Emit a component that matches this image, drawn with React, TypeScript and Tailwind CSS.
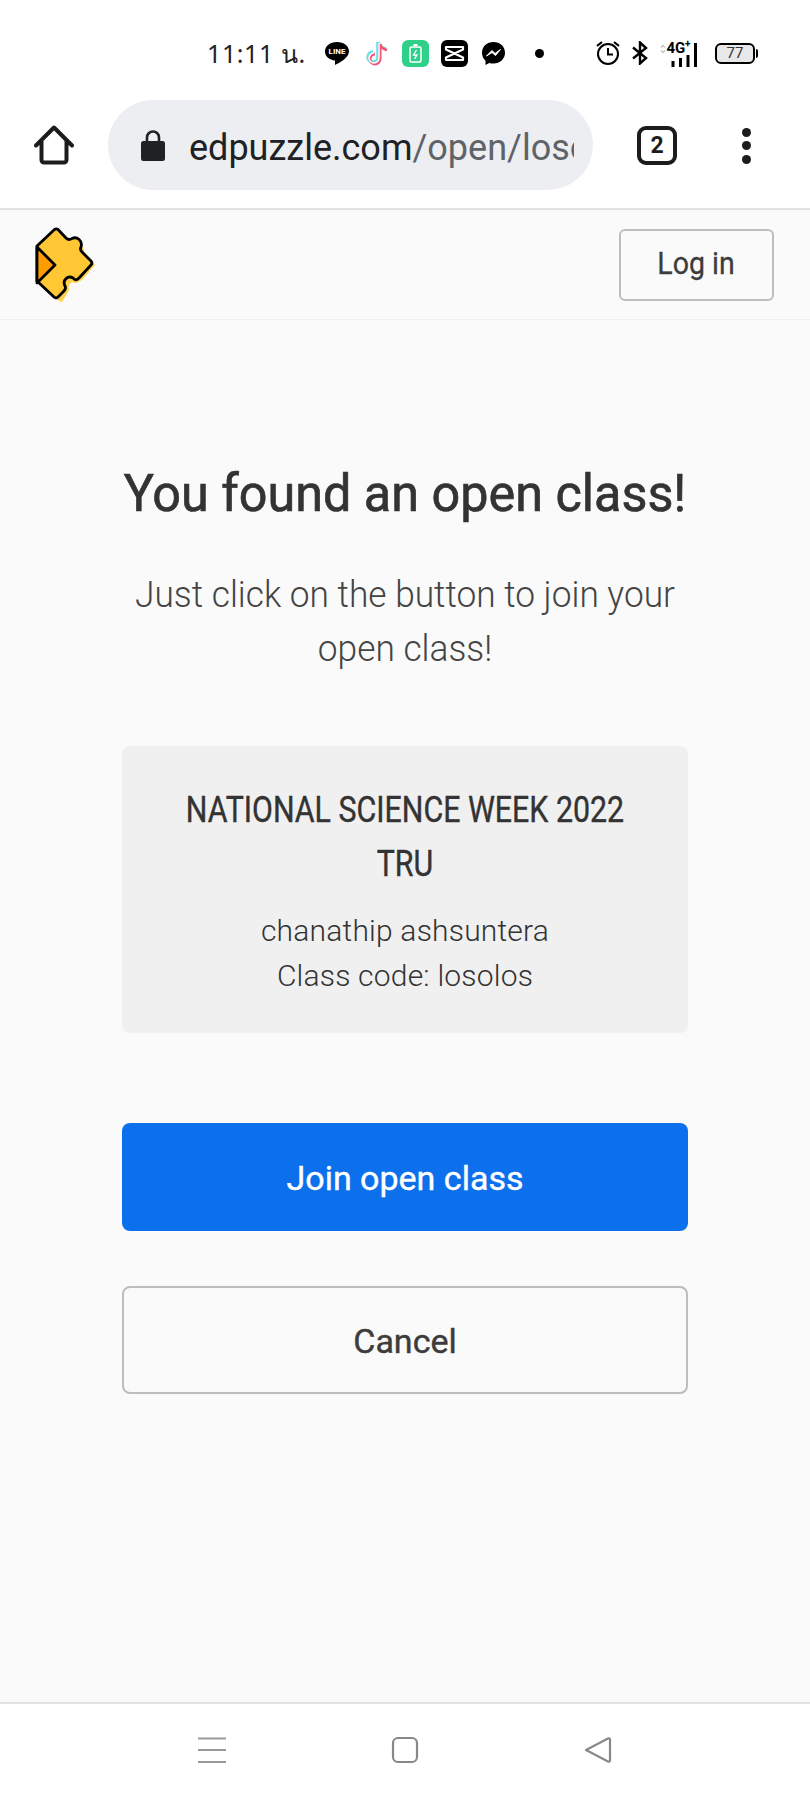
export default function App() {
  return (
    <div className="w-[810px] h-[1800px] flex flex-col bg-[#fafafa] overflow-hidden font-['Roboto',sans-serif] text-[#333]">
      {/* Phone status bar */}
      <div className="h-[100px] bg-white flex items-center pl-[207px] pt-[6px] shrink-0">
        <span className="text-[25px] tracking-[0.6px] leading-none text-[#222] w-[112px] whitespace-nowrap font-['Noto_Sans','Roboto',sans-serif]">11:11 น.</span>
        <svg width="26" height="26" viewBox="0 0 26 26" className="ml-[5px]">
          <path d="M13 2C6 2 1 6 1 11.500C1 16.500 5.500 20 11 20.500L11 25C15 23 25 18 25 11.500C25 6 20 2 13 2Z" fill="#000" />
          <text x="13" y="14" textAnchor="middle" fontSize="8" fontWeight="700" fill="#fff" fontFamily="Roboto">LINE</text>
        </svg>
        <svg width="26" height="28" viewBox="0 0 26 28" className="ml-[13px]">
          <path d="M15 3V18A5 5 0 1 1 10 13" fill="none" stroke="#67e0e6" strokeWidth="3.500" />
          <path d="M15 3C16 7 19 9 23 9.500" fill="none" stroke="#67e0e6" strokeWidth="3" />
          <path d="M17 5V20A5 5 0 1 1 12 15" fill="none" stroke="#f0557a" strokeWidth="3" />
          <path d="M17 5C18 8 21 10.500 24 11" fill="none" stroke="#f0557a" strokeWidth="2.500" />
          <path d="M16 4V19A5 5 0 1 1 11 14" fill="none" stroke="#fff" strokeWidth="1.500" />
        </svg>
        <div className="ml-[13px] w-[27px] h-[27px] rounded-[6px] bg-[#2fd08a] flex items-center justify-center">
          <svg width="13" height="19" viewBox="0 0 13 19">
            <rect x="1" y="3" width="11" height="15" rx="1.500" fill="none" stroke="#fff" strokeWidth="1.500" />
            <path d="M4.500 1H8.500" stroke="#fff" strokeWidth="2" />
            <path d="M7.500 6L4.500 11H8L5.500 15" fill="none" stroke="#fff" strokeWidth="1.300" />
          </svg>
        </div>
        <div className="ml-[12px] w-[27px] h-[27px] rounded-[6px] bg-black flex items-center justify-center">
          <svg width="21" height="17" viewBox="0 0 21 17">
            <path d="M2 2H19V4.500L2 12.500V15H19V12.500L2 4.500Z" fill="none" stroke="#fff" strokeWidth="2.200" strokeLinejoin="round" />
          </svg>
        </div>
        <svg width="25" height="25" viewBox="0 0 25 25" className="ml-[13px]">
          <path d="M12.500 1C6 1 1 5.500 1 11.800C1 15 2.300 17.800 4.500 19.800V24L8.300 21.900C9.600 22.300 11 22.500 12.500 22.500C19 22.500 24 18 24 11.800C24 5.500 19 1 12.500 1Z" fill="#000" />
          <path d="M5.500 15L11 9.500L14 12.500L19.500 8.500L14.500 14.500L11 11.500Z" fill="#fff" stroke="#fff" strokeWidth="1" strokeLinejoin="round" />
        </svg>
        <div className="ml-[29px] w-[9px] h-[9px] rounded-full bg-black" />
        <svg width="26" height="26" viewBox="0 0 26 26" className="ml-[51px]">
          <circle cx="13" cy="14" r="10" fill="none" stroke="#000" strokeWidth="2" />
          <path d="M13 8V14.500H18" fill="none" stroke="#000" strokeWidth="2" />
          <path d="M2 6L7 2M24 6L19 2" stroke="#000" strokeWidth="2.200" />
        </svg>
        <svg width="18" height="24" viewBox="0 0 18 24" className="ml-[10px]">
          <path d="M2 6.500L15 17L9 22.500V1.500L15 7L2 17.500" fill="none" stroke="#000" strokeWidth="2.400" />
        </svg>
        <svg width="44" height="28" viewBox="0 0 44 28" className="ml-[9px]">
          <path d="M3 8.500L5 6.500L7 8.500M3 11.500L5 13.500L7 11.500" fill="none" stroke="#c4c4c4" strokeWidth="1.300" />
          <text x="8.500" y="14" fontSize="15" fontWeight="700" fill="#000" fontFamily="Roboto">4G</text>
          <text x="27" y="8" fontSize="10" fontWeight="700" fill="#000" fontFamily="Roboto">+</text>
          <rect x="13.500" y="22" width="3" height="6" fill="#000" />
          <rect x="21" y="19" width="3" height="9" fill="#000" />
          <rect x="28.500" y="16" width="3" height="12" fill="#000" />
          <rect x="36" y="4" width="3" height="24" fill="#000" />
        </svg>
        <div className="ml-[13px] flex items-center">
          <div className="w-[40px] h-[21px] rounded-[6px] border-2 border-black bg-[#e8e8e8] flex items-center justify-center text-[15px] leading-none text-[#333]">77</div>
          <div className="ml-[1px] w-[2px] h-[9px] rounded-r-sm bg-black" />
        </div>
      </div>

      {/* Browser toolbar */}
      <div className="h-[110px] bg-white border-b-2 border-[#e2e2e2] flex items-start shrink-0">
        <div className="w-[108px] h-[90px] flex items-center justify-start pl-[34px]">
          <svg width="40" height="40" viewBox="0 0 40 40">
            <path d="M2 20.500L20 2.500L38 20.500M7.500 16V35A2.500 2.500 0 0 0 10 37.500H30A2.500 2.500 0 0 0 32.500 35V16" fill="none" stroke="#1c1c1c" strokeWidth="4" strokeLinecap="round" strokeLinejoin="round" />
          </svg>
        </div>
        <div className="w-[485px] h-[90px] rounded-full bg-[#eceef1] flex items-center pl-[33px] overflow-hidden">
          <svg width="24" height="32" viewBox="0 0 24 32" className="shrink-0">
            <path d="M6 13V8.500A6 6 0 0 1 18 8.500V13" fill="none" stroke="#202124" strokeWidth="2.600" />
            <rect x="0" y="12" width="24" height="20" rx="2.500" fill="#202124" />
          </svg>
          <div className="ml-[24px] w-[385px] h-[50px] overflow-hidden whitespace-nowrap text-[36px] leading-[50px] pt-[3px]">
            <span className="text-[#202124]">edpuzzle.com</span>
            <span className="text-[#5f6368]">/open/losolos</span>
          </div>
        </div>
        <div className="ml-[44px] mt-[26px] w-[40px] h-[39px] rounded-[9px] border-[4px] border-[#1c1c1c] flex items-center justify-center text-[23px] font-bold leading-none text-[#1c1c1c]">2</div>
        <div className="ml-[65px] mt-[27.5px] flex flex-col gap-[4.500px]">
          <div className="w-[9px] h-[9px] rounded-full bg-[#1c1c1c]" />
          <div className="w-[9px] h-[9px] rounded-full bg-[#1c1c1c]" />
          <div className="w-[9px] h-[9px] rounded-full bg-[#1c1c1c]" />
        </div>
      </div>

      {/* Site header */}
      <div className="h-[110px] border-b border-[#efefef] flex items-center justify-between pl-[30px] pr-[36px] shrink-0">
        <svg width="70" height="80" viewBox="30 225 70 80" className="mt-[1px]">
          <path d="M60 232L72 242C78 240 84 244 84 252L95 265L82 280L76 283C70 281 68 285 69 290L62 302L57 300Z" fill="#ffd149" />
          <path d="M54.500 229.500A3 3 0 0 1 58 229.500L66 238C68 240 70 240 72 238.500C77 236 83 241 81 247C80 249 80 250 82 252L91 261A3 3 0 0 1 91 265L79 278C76 281 75 280 73 278C68 275 62 280 65 286C66 288 66 289 64 291L58 297A3 3 0 0 1 54 297L37 281V246Z" fill="#ffc733" stroke="#000" strokeWidth="2.800" strokeLinejoin="round" />
          <path d="M37 247L55 265L37 283Z" fill="#ff9d00" />
          <path d="M37 247L55 265L37 283Z" fill="none" stroke="#000" strokeWidth="2.800" strokeLinejoin="round" />
        </svg>
        <button className="w-[155px] h-[72px] rounded-[6px] border-2 border-[#bdbdbd] text-[31px] leading-none text-[#3c3c3c] pb-[2px] [-webkit-text-stroke:0.3px_#3c3c3c]">
          <span className="inline-block whitespace-nowrap scale-x-[.92]">Log in</span>
        </button>
      </div>

      {/* Main content */}
      <main className="w-[566px] mx-auto flex-1 flex flex-col items-stretch text-center pt-[142px]">
        <h1 className="-mx-[40px] text-[52px] leading-[64px] font-normal text-[#333] whitespace-nowrap scale-x-[.968] [-webkit-text-stroke:0.7px_#333]">You found an open class!</h1>
        <p className="mt-[42px] text-[36px] leading-[54px] font-light text-[#444] scale-x-[.98]">Just click on the button to join your open class!</p>
        <div className="mt-[70px] h-[287px] rounded-[8px] bg-[#f0f0f0] pt-[37px]">
          <div className="text-[36px] leading-[54px] font-normal text-[#333] scale-x-[.843] [-webkit-text-stroke:0.4px_#333]">NATIONAL SCIENCE WEEK 2022 TRU</div>
          <div className="mt-[17px] text-[30px] leading-[45px] font-light tracking-[0.2px] text-[#333]">chanathip ashsuntera</div>
          <div className="text-[30px] leading-[45px] font-light tracking-[0.2px] text-[#333]">Class code: losolos</div>
        </div>
        <button className="mt-[90px] h-[108px] rounded-[8px] bg-[#0c6feb] text-white text-[34px] pt-[3px] [-webkit-text-stroke:0.4px_#fff]">Join open class</button>
        <button className="mt-[55px] h-[108px] rounded-[8px] border-2 border-[#bdbdbd] text-[34px] text-[#3c3c3c] pt-[2px] [-webkit-text-stroke:0.4px_#3c3c3c]">Cancel</button>
      </main>

      {/* Android nav */}
      <div className="h-[98px] bg-white border-t-2 border-[#e2e2e2] flex items-center pb-[5px] shrink-0">
        <svg width="28" height="26" viewBox="0 0 28 26" className="ml-[198px]">
          <path d="M0 1.500H28M0 13H28M0 25H28" stroke="#999" strokeWidth="2.200" />
        </svg>
        <svg width="28" height="28" viewBox="0 0 28 28" className="ml-[165px]">
          <rect x="2" y="2" width="24" height="24" rx="5" fill="none" stroke="#888" strokeWidth="2.200" />
        </svg>
        <svg width="28" height="28" viewBox="0 0 28 28" className="ml-[165px]">
          <path d="M2 14L24 2.500C25 2 26 2.500 26 3.500V24.500C26 25.500 25 26 24 25.500Z" fill="none" stroke="#888" strokeWidth="2.200" strokeLinejoin="round" />
        </svg>
      </div>
    </div>
  );
}
